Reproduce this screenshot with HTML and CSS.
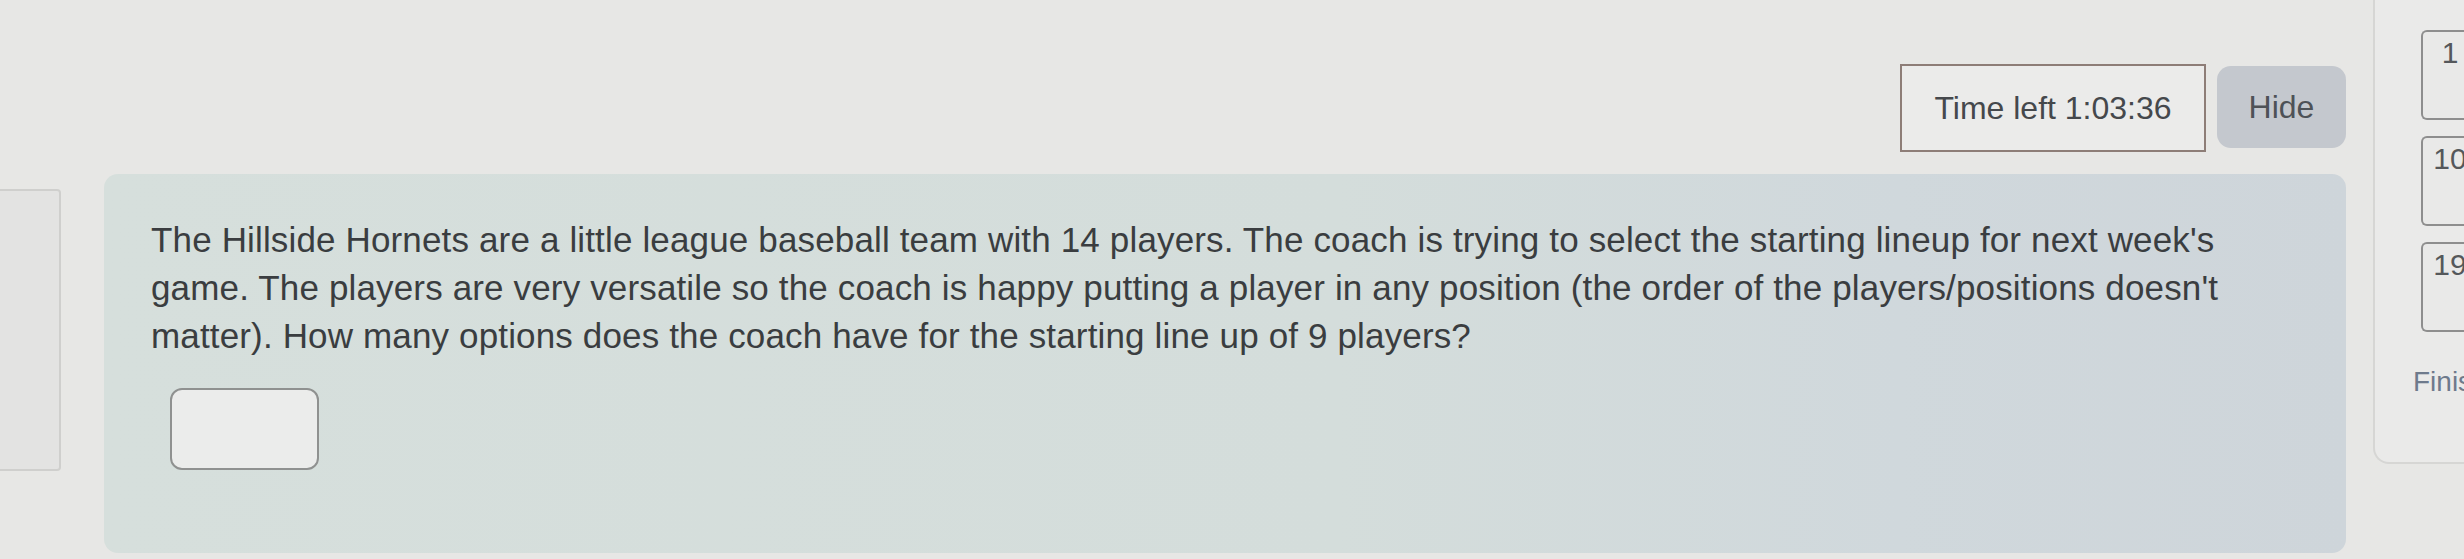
FILE: index.html
```html
<!DOCTYPE html>
<html lang="en">
<head>
    <meta charset="UTF-8">
    <meta name="viewport" content="width=device-width, initial-scale=1.0">
    <title>Quiz</title>
    <link rel="stylesheet" href="styles.css">
</head>
<body>

    <div class="page">
        <!-- previous block, cut off at the left edge -->
        <div class="stub"></div>

        <div class="main">
            <div class="timer-row">
                <div class="timer">Time left 1:03:36</div>
                <button class="hide">Hide</button>
            </div>

            <div class="question">
                <p class="qtext">The Hillside Hornets are a little league baseball team with 14 players. The coach is trying to select the starting lineup for next week's game. The players are very versatile so the coach is happy putting a player in any position (the order of the players/positions doesn't matter). How many options does the coach have for the starting line up of 9 players?</p>
                <input class="answer" type="text">
            </div>
        </div>

        <!-- quiz navigation -->
        <div class="nav">
            <div class="navbox">1</div>
            <div class="navbox">10</div>
            <div class="navbox">19</div>
            <div class="finish">Finish attempt</div>
        </div>
    </div>

</body>
</html>
```

FILE: styles.css
```css
body {
    margin: 0;
    background-color: #e7e7e5;
    font-family: "Liberation Sans", Arial, sans-serif;
    color: #3a3d40;
    overflow: hidden;
}
.page {
    display: grid;
    grid-template-columns: 61px 2285px 1fr;
    height: 559px;
}
.stub {
    margin-top: 189px;
    height: 282px;
    background-color: #e3e3e2;
    border: 2px solid #cfcfcd;
    border-left: none;
    border-radius: 0 4px 4px 0;
    box-sizing: border-box;
}
.main {
    margin-left: 43px;
    padding-top: 64px;
}
.timer-row {
    display: flex;
    justify-content: flex-end;
    align-items: flex-start;
    gap: 11px;
}
.timer {
    width: 306px;
    height: 88px;
    box-sizing: border-box;
    border: 2px solid #8d7d77;
    background-color: #ebebea;
    font-size: 32px;
    line-height: 84px;
    text-align: center;
    color: #45484c;
}
.hide {
    width: 129px;
    height: 82px;
    margin-top: 2px;
    border: none;
    border-radius: 14px;
    background-color: #c4c8ce;
    font-family: inherit;
    font-size: 32px;
    color: #4e5257;
}
.question {
    margin-top: 22px;
    height: 379px;
    box-sizing: border-box;
    padding: 42px 47px 0 47px;
    border-radius: 14px;
    background: linear-gradient(90deg, #d6dfdc 0%, #d4dddb 55%, #d0d8dc 80%, #ced5da 100%);
}
.qtext {
    margin: 0;
    width: 2110px;
    font-size: 35px;
    line-height: 48px;
    letter-spacing: 0.15px;
}
.answer {
    display: block;
    margin: 28px 0 0 19px;
    width: 149px;
    height: 82px;
    box-sizing: border-box;
    border: 2px solid #8f9190;
    border-radius: 12px;
    background-color: #ebeceb;
}
.nav {
    margin-left: 27px;
    height: 464px;
    box-sizing: border-box;
    padding: 30px 0 0 46px;
    background-color: #eaeae9;
    border-left: 2px solid #d6d6d4;
    border-bottom: 2px solid #d6d6d4;
    border-radius: 0 0 0 16px;
    overflow: hidden;
    display: flex;
    flex-direction: column;
    gap: 16px;
}
.navbox {
    width: 56px;
    height: 90px;
    flex-shrink: 0;
    box-sizing: border-box;
    border: 2px solid #8e8e8e;
    border-right: none;
    border-radius: 6px 0 0 6px;
    background-color: #e9e9e8;
    padding-top: 4px;
    text-align: center;
    font-size: 30px;
    color: #55585b;
}
.finish {
    margin: 18px 0 0 -8px;
    white-space: nowrap;
    font-size: 28px;
    color: #6e7a8c;
}
```
